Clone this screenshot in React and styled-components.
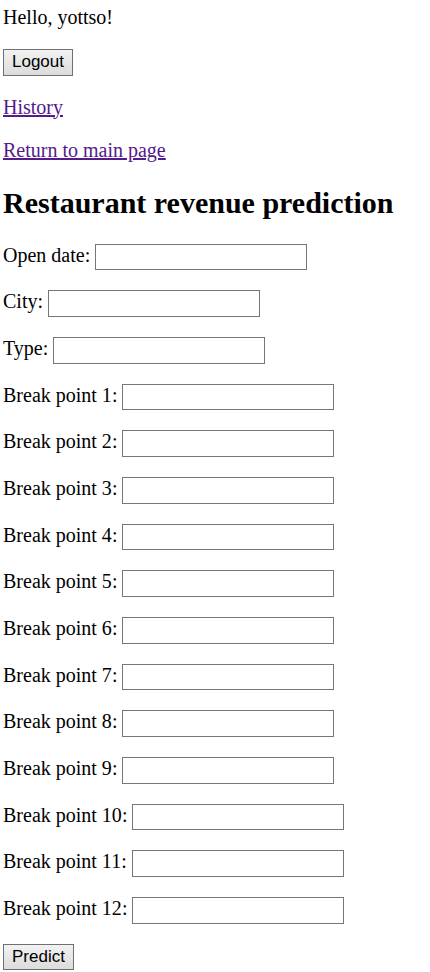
import React from 'react'
import styled, { createGlobalStyle } from 'styled-components'

const GlobalStyle = createGlobalStyle`
body {
  margin: 0;
  background: #fff;
  color: #000;
  font-family: "Liberation Serif", "Times New Roman", serif;
  font-size: 20px;
}
`

const Page = styled.div`
  padding: 6px 3px 0;
  & > :first-child {
    margin-top: 0;
  }
`

const Line = styled.p`
  margin: 20px 0;
`

const Link = styled.a`
  color: #551a8b;
  text-decoration: underline;
  cursor: pointer;
`

const Button = styled.button`
  font-family: "Liberation Sans", Arial, sans-serif;
  font-size: 17px;
  color: #000;
  height: 26.67px;
  padding: 0 8px;
  border: 1px solid #707070;
  border-radius: 0;
  background: linear-gradient(#f2f2f2, #dcdcdc);
`

const Section = styled.section``

const Title = styled.h1`
  font-size: 30px;
  font-weight: bold;
  margin: 24.5px 0 23.5px;
`

const Input = styled.input`
  box-sizing: border-box;
  width: 212px;
  height: 26.67px;
  border: 1px solid #767676;
  border-radius: 0;
  padding: 1px 3px;
  font-family: "Liberation Sans", Arial, sans-serif;
  font-size: 16.67px;
  vertical-align: baseline;
`

const fields = [
  'Open date',
  'City',
  'Type',
  ...Array.from({ length: 12 }, (_, i) => `Break point ${i + 1}`),
]

export default function App() {
  return (
    <>
      <GlobalStyle />
      <Page>
        <Line>Hello, yottso!</Line>
        <Line>
          <Button>Logout</Button>
        </Line>
        <Line>
          <Link href="#history">History</Link>
        </Line>
        <Line>
          <Link href="#main">Return to main page</Link>
        </Line>
        <Section>
          <Title>Restaurant revenue prediction</Title>
          <form onSubmit={(e) => e.preventDefault()}>
            {fields.map((f) => (
              <Line key={f}>
                {f}: <Input type="text" />
              </Line>
            ))}
            <Line>
              <Button type="submit">Predict</Button>
            </Line>
          </form>
        </Section>
      </Page>
    </>
  )
}
